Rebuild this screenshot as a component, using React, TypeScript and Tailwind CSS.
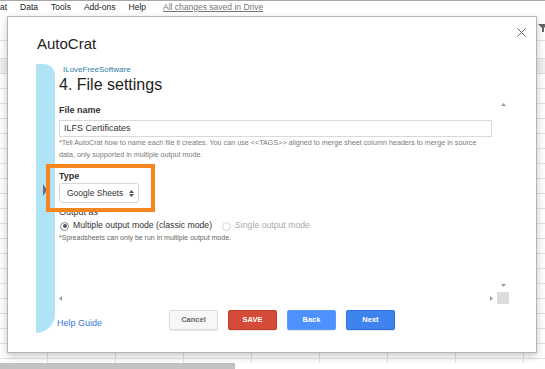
import React from 'react';

const Tri = ({ dir, color = '#9a9a9a' }: { dir: 'up' | 'down' | 'left' | 'right'; color?: string }) => {
  const pts = {
    up: '0,3 2.5,0 5,3',
    down: '0,0 5,0 2.5,3',
    left: '3,0 3,5 0,2.5',
    right: '0,0 3,2.5 0,5',
  }[dir];
  const vertical = dir === 'up' || dir === 'down';
  return (
    <svg width={vertical ? 5 : 3} height={vertical ? 3 : 5} viewBox={vertical ? '0 0 5 3' : '0 0 3 5'}>
      <polygon points={pts} fill={color} />
    </svg>
  );
};

const Sheet = () => (
  <div className="flex flex-col h-full">
    <div className="h-[13px] border-t border-[#a6a6a6] flex items-center text-[8.5px] leading-[12px] text-[#222] gap-[13px] whitespace-nowrap">
      <span>at</span>
      <span>Data</span>
      <span>Tools</span>
      <span>Add-ons</span>
      <span>Help</span>
      <span className="ml-[4px] text-[#777] underline">All changes saved in Drive</span>
    </div>
    <div className="h-[28px] border-b border-[#e2e2e2] flex justify-end items-start pt-[11px] overflow-hidden">
      <svg width="10" height="8" viewBox="0 0 10 8" className="-mr-[3px]">
        <polygon points="0,0 10,0 6,4 6,8 4,8 4,4" fill="#666" />
      </svg>
    </div>
    <div className="h-[18px] border-b border-[#e2e2e2]" />
    <div className="h-[14px] bg-[#f1f1f1]" />
    <div className="flex-1 bg-[image:linear-gradient(#e0e0e0_1px,transparent_1px),linear-gradient(90deg,#e0e0e0_1px,transparent_1px)] bg-size-[68px_15px] bg-position-[47px_0px]" />
    <div className="h-[6px] bg-white">
      <div className="w-[235px] h-full bg-[#c2c2c2]" />
    </div>
  </div>
);

const buttons = [
  { label: 'Cancel', cls: 'bg-[#f7f7f7] border-[#dcdcdc] text-[#666]' },
  { label: 'SAVE', cls: 'bg-[#d54b39] border-[#c53a29] text-white' },
  { label: 'Back', cls: 'bg-[#4d90fe] border-[#5b9bff] text-white' },
  { label: 'Next', cls: 'bg-[#3f83ee] border-[#2f6fdc] text-white' },
];

export default function App() {
  return (
    <div className="relative w-[545px] h-[369px] overflow-hidden bg-white font-['Liberation_Sans',Arial,sans-serif]">
      <Sheet />

      <div className="absolute left-[7px] top-[16px] w-[530px] h-[337px] bg-white border border-[#b4b4b4] shadow-[0_3px_8px_rgba(0,0,0,0.22)] flex flex-col">
        <div className="relative h-[47px] shrink-0 pl-[29px] pt-[18px]">
          <div className="text-[15px] leading-[18px] text-[#222]">AutoCrat</div>
          <svg className="absolute right-[10px] top-[11px]" width="9" height="9" viewBox="0 0 9 9">
            <path d="M0.5 0.5L8.5 8.5M8.5 0.5L0.5 8.5" stroke="#666" strokeWidth="1" />
          </svg>
        </div>

        <div className="flex flex-1 min-h-0 pl-[28px] pb-[19px]">
          <div className="relative w-[19px] shrink-0 bg-[#b1e3f7] rounded-tr-[12px] rounded-br-[20px]">
            <svg className="absolute left-[7px] top-[120px]" width="4" height="12" viewBox="0 0 4 12">
              <polygon points="0,0 4,6 0,12" fill="#6f6f6f" />
            </svg>
          </div>

          <div className="flex flex-col pl-[4px]">
            <div className="pl-[4px] text-[8px] leading-[12px] text-[#2f7ea8]">ILoveFreeSoftware</div>
            <div className="text-[16px] leading-[18px] text-[#222]">4. File settings</div>

            <div className="flex h-[210px]">
              <div className="w-[438px] flex flex-col">
                <div className="mt-[10px] text-[9px] leading-[12px] font-bold text-[#333]">File name</div>
                <div className="mt-[4px] h-[17px] w-[433px] border border-[#d9d9d9] flex items-center pl-[4px] text-[9px] text-[#333]">
                  ILFS Certificates
                </div>
                <div className="text-[7.2px] leading-[12px] text-[#7a7a7a] whitespace-nowrap">
                  <div>*Tell AutoCrat how to name each file it creates. You can use &lt;&lt;TAGS&gt;&gt; aligned to merge sheet column headers to merge in source</div>
                  <div>data, only supported in multiple output mode.</div>
                </div>

                <div className="mt-[9px] text-[9px] leading-[12px] font-bold text-[#333]">Type</div>
                <div className="mt-[1px] h-[20px] w-[80px] border border-[#d6d6d6] rounded-[3px] flex items-center justify-between pl-[7px] pr-[4px] text-[8.5px] text-[#333]">
                  <span>Google Sheets</span>
                  <span className="flex flex-col gap-[1px]">
                    <Tri dir="up" color="#555" />
                    <Tri dir="down" color="#555" />
                  </span>
                </div>

                <div className="mt-[3px] text-[9px] leading-[12px] text-[#333]">Output as</div>
                <div className="mt-[2px] h-[12px] flex items-center text-[8.7px] whitespace-nowrap">
                  <span className="ml-[1px] w-[9px] h-[9px] rounded-full border border-[#8a8a8a] flex items-center justify-center">
                    <span className="w-[4px] h-[4px] rounded-full bg-[#555]" />
                  </span>
                  <span className="ml-[4px] text-[#333]">Multiple output mode (classic mode)</span>
                  <span className="ml-[10px] w-[9px] h-[9px] rounded-full border border-[#d4d4d4]" />
                  <span className="ml-[4px] text-[#aaa]">Single output mode</span>
                </div>
                <div className="text-[7px] leading-[12px] text-[#666] whitespace-nowrap">
                  *Spreadsheets can only be run in multiple output mode.
                </div>

                <div className="flex-1" />
                <div className="h-[12px] flex items-center justify-between pr-[4px]">
                  <Tri dir="left" />
                  <Tri dir="right" />
                </div>
              </div>

              <div className="w-[12px] flex flex-col items-center">
                <div className="mt-[9px]">
                  <Tri dir="up" />
                </div>
                <div className="flex-1" />
                <Tri dir="down" />
                <div className="mt-[5px] w-full h-[12px] bg-[#dcdcdc]" />
              </div>
            </div>

            <div className="mt-[6px] flex">
              <div className="-ml-[2px] w-[112px] pt-[7px] text-[9px] leading-[12px] text-[#3c78d8]">Help Guide</div>
              <div className="flex gap-[10px]">
                {buttons.map((b) => (
                  <div
                    key={b.label}
                    className={`w-[49px] h-[20px] border rounded-[2px] flex items-center justify-center text-[7.5px] font-bold shadow-[0_1px_1px_rgba(0,0,0,0.1)] ${b.cls}`}
                  >
                    {b.label}
                  </div>
                ))}
              </div>
            </div>
          </div>
        </div>
      </div>

      <div className="absolute left-[46px] top-[164px] w-[109px] h-[48px] border-4 border-[#f7851f] z-10" />
    </div>
  );
}
